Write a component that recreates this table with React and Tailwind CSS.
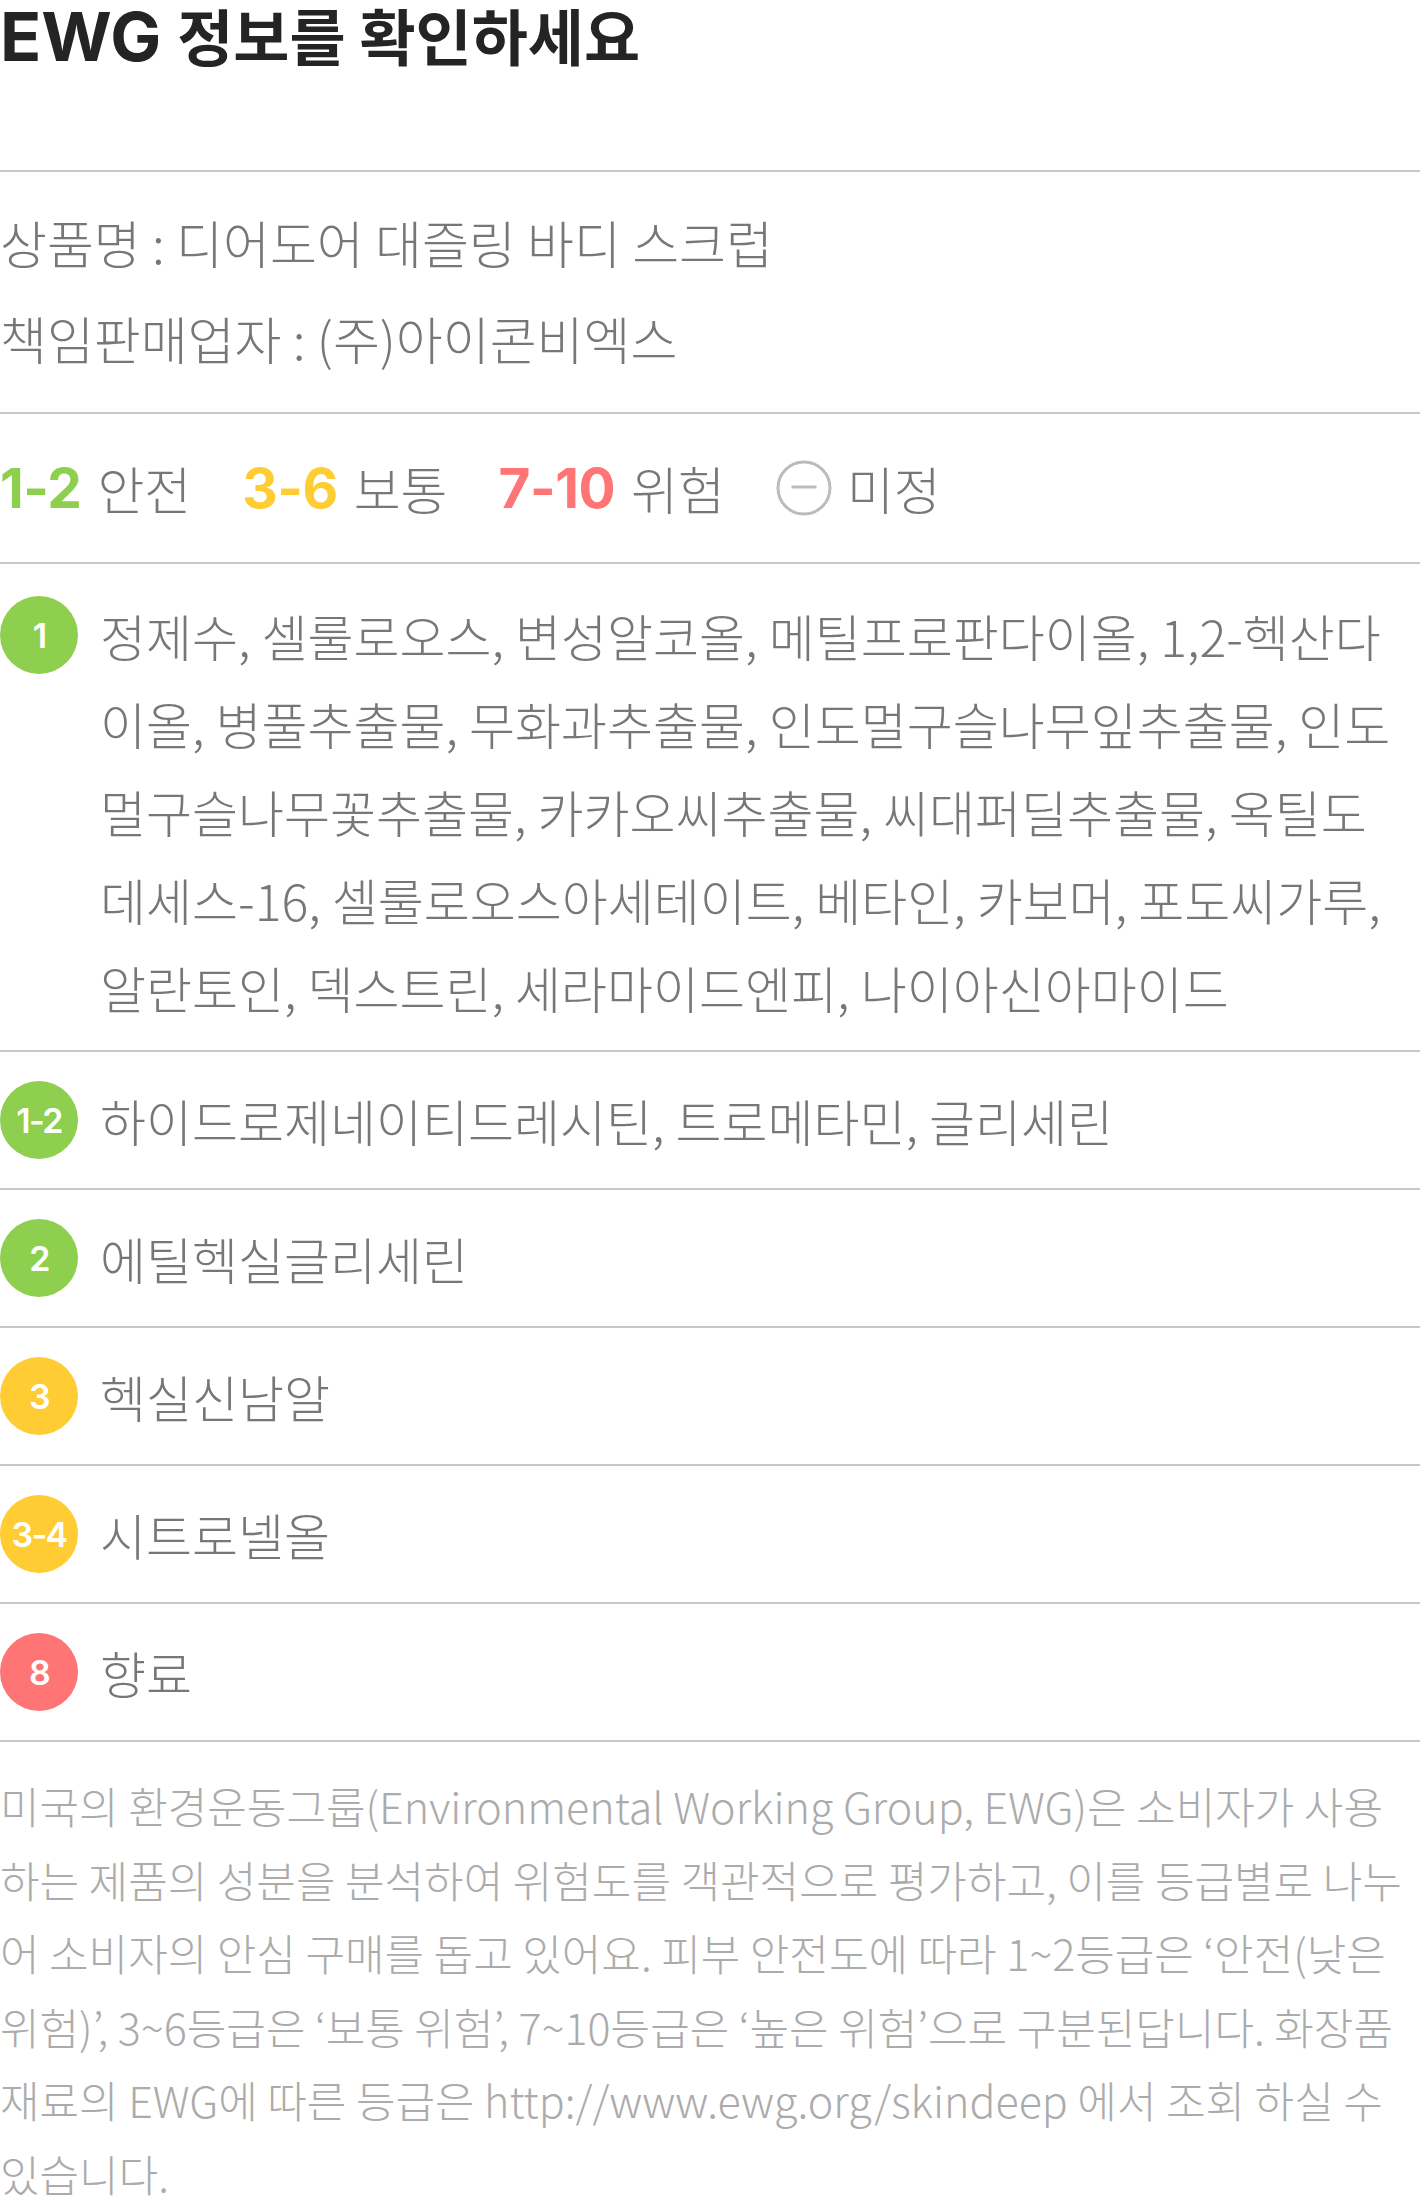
const ingredients = [
  {
    grade: "1",
    badge: "bg-[#8fcf4f]",
    names:
      "정제수, 셀룰로오스, 변성알코올, 메틸프로판다이올, 1,2-헥산다이올, 병풀추출물, 무화과추출물, 인도멀구슬나무잎추출물, 인도멀구슬나무꽃추출물, 카카오씨추출물, 씨대퍼딜추출물, 옥틸도데세스-16, 셀룰로오스아세테이트, 베타인, 카보머, 포도씨가루, 알란토인, 덱스트린, 세라마이드엔피, 나이아신아마이드",
  },
  { grade: "1-2", badge: "bg-[#8fcf4f]", names: "하이드로제네이티드레시틴, 트로메타민, 글리세린" },
  { grade: "2", badge: "bg-[#8fcf4f]", names: "에틸헥실글리세린" },
  { grade: "3", badge: "bg-[#ffcc33]", names: "헥실신남알" },
  { grade: "3-4", badge: "bg-[#ffcc33]", names: "시트로넬올" },
  { grade: "8", badge: "bg-[#ff7474]", names: "향료" },
];

const legend = [
  { range: "1-2", label: "안전", color: "text-[#8fcf4f]" },
  { range: "3-6", label: "보통", color: "text-[#ffcc33]" },
  { range: "7-10", label: "위험", color: "text-[#ff7474]" },
];

function Badge({ grade, badge }) {
  return (
    <div
      className={`flex h-[78px] w-[78px] shrink-0 items-center justify-center rounded-full ${badge} font-['Inter',sans-serif] text-[34px] font-semibold tracking-tighter text-white`}
    >
      {grade}
    </div>
  );
}

export default function App() {
  return (
    <div className="w-[1420px] bg-white font-['Noto_Sans_CJK_KR','Noto_Sans',sans-serif] text-[#777777]">
      <header className="h-[172px] border-b-2 border-[#c8c8c8]">
        <h1 className="flex items-baseline gap-[16px] pt-[2px] text-[61px] leading-none font-bold text-[#242424]">
          <span className="font-['Inter',sans-serif] text-[68px] leading-none">EWG</span>
          <span className="leading-none">정보를 확인하세요</span>
        </h1>
      </header>

      <section className="border-b-2 border-[#c8c8c8] pt-[22px] pb-[26px] text-[51px] leading-[96px] font-light">
        <p>상품명 : 디어도어 대즐링 바디 스크럽</p>
        <p>책임판매업자 : (주)아이콘비엑스</p>
      </section>

      <section className="flex h-[150px] items-center gap-[51px] border-b-2 border-[#c8c8c8] text-[51px] font-light">
        {legend.map((item) => (
          <div key={item.range} className="flex items-center gap-[16px]">
            <span className={`font-['Inter',sans-serif] text-[55px] font-bold tracking-[-0.5px] ${item.color}`}>
              {item.range}
            </span>
            <span>{item.label}</span>
          </div>
        ))}
        <div className="flex items-center gap-[15px]">
          <svg width="56" height="56" viewBox="0 0 56 56" fill="none" stroke="#bcbcbc" strokeWidth="3">
            <circle cx="28" cy="28" r="26" />
            <line x1="15.5" y1="27" x2="40.5" y2="27" />
          </svg>
          <span>미정</span>
        </div>
      </section>

      {ingredients.map((item, i) => (
        <div
          key={item.grade}
          className={
            i === 0
              ? "flex items-start gap-[22px] border-b-2 border-[#c8c8c8] pt-[27px] pr-[14px] pb-[19px]"
              : "flex items-center gap-[22px] border-b-2 border-[#c8c8c8] py-[24px] pr-[14px]"
          }
        >
          <div className={i === 0 ? "mt-[5px]" : ""}>
            <Badge grade={item.grade} badge={item.badge} />
          </div>
          <p className="text-[50px] leading-[88px] font-light">{item.names}</p>
        </div>
      ))}

      <p className="pt-[27px] text-[43px] leading-[73.5px] font-light text-[#ababab]">
        미국의 환경운동그룹(Environmental Working Group, EWG)은 소비자가 사용하는 제품의 성분을 분석하여 위험도를
        객관적으로 평가하고, 이를 등급별로 나누어 소비자의 안심 구매를 돕고 있어요. 피부 안전도에 따라 1~2등급은
        ‘안전(낮은 위험)’, 3~6등급은 ‘보통 위험’, 7~10등급은 ‘높은 위험’으로 구분된답니다. 화장품 재료의 EWG에 따른
        등급은 http://www.ewg.org/skindeep 에서 조회 하실 수 있습니다.
      </p>
    </div>
  );
}
